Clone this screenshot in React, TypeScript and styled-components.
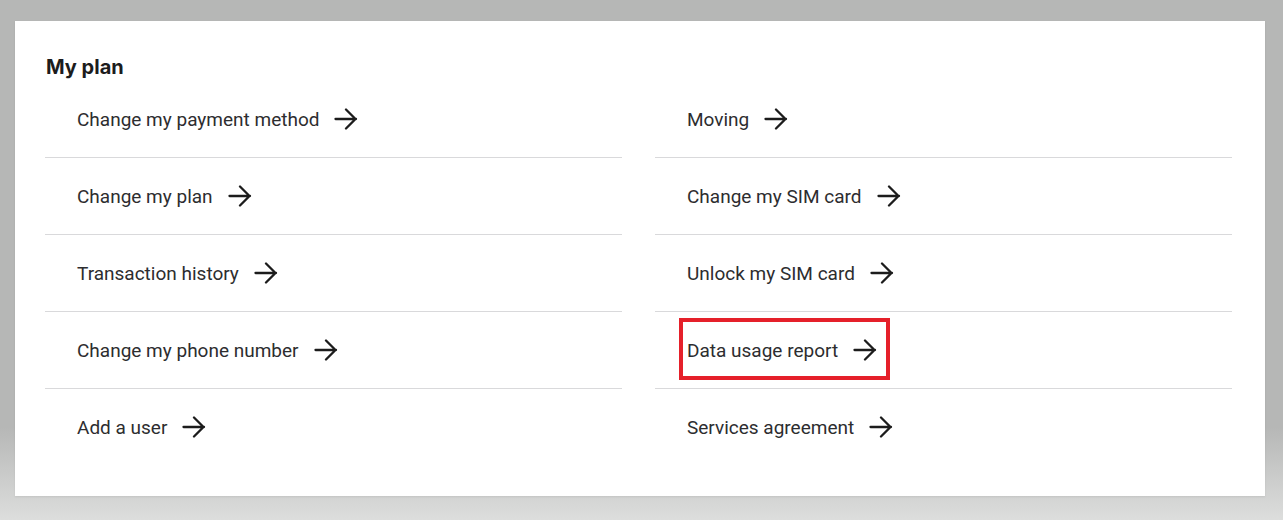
import React from 'react'
import styled, { createGlobalStyle } from 'styled-components'

const GlobalStyle = createGlobalStyle`
    html, body {
        margin: 0;
        padding: 0;
    }
    body {
        min-height: 520px;
        background: linear-gradient(#b6b7b6 0%, #b6b7b6 82%, #dddedd 100%);
        font-family: Roboto, "Liberation Sans", sans-serif;
    }
`

const Page = styled.div`
    padding: 21px 18px 25px 15px;
`

const Card = styled.section`
    background-color: #fff;
    padding: 34px 33px 30px 30px;
    box-shadow: 0 1px 2px rgba(0, 0, 0, 0.08);
`

const Title = styled.h2`
    margin: 0 0 0 1px;
    height: 26px;
    font-family: Inter, "Noto Sans", sans-serif;
    font-size: 20px;
    font-weight: 700;
    line-height: 24px;
    color: #1c1c1c;
`

const Columns = styled.div`
    display: grid;
    grid-template-columns: 1fr 1fr;
    column-gap: 33px;
`

const List = styled.ul`
    margin: 0;
    padding: 0;
    list-style: none;
`

const Row = styled.li<{ $last?: boolean }>`
    padding: 6px 0 8px 24px;
    border-bottom: 1px solid ${p => (p.$last ? 'transparent' : '#d9d9db')};
`

const Link = styled.a<{ $focused?: boolean }>`
    display: inline-flex;
    align-items: center;
    height: 52px;
    padding: 2px 9px 0 4px;
    border: 4px solid ${p => (p.$focused ? '#e5202a' : 'transparent')};
    font-size: 19px;
    color: #2d2d2f;
    text-decoration: none;
    cursor: pointer;
`

const Arrow = styled.svg`
    margin-left: 15px;
    flex-shrink: 0;
`

const ArrowIcon = () => (
    <Arrow width="24" height="22" viewBox="0 0 24 22" fill="none">
        <path
            d="M1.5 11h20.5M12 1.5l9.5 9.5-9.5 9.5"
            stroke="#1c1c1c"
            strokeWidth="2.3"
            strokeLinecap="round"
            strokeLinejoin="round"
        />
    </Arrow>
)

const left = [
    'Change my payment method',
    'Change my plan',
    'Transaction history',
    'Change my phone number',
    'Add a user',
]

const right = [
    'Moving',
    'Change my SIM card',
    'Unlock my SIM card',
    'Data usage report',
    'Services agreement',
]

const LinkList = ({ items, focused }: { items: string[]; focused?: string }) => (
    <List>
        {items.map((label, i) => (
            <Row key={label} $last={i === items.length - 1}>
                <Link $focused={label === focused}>
                    {label}
                    <ArrowIcon />
                </Link>
            </Row>
        ))}
    </List>
)

const App = () => {
    return (
        <Page>
            <GlobalStyle />
            <Card>
                <Title>My plan</Title>
                <Columns>
                    <LinkList items={left} />
                    <LinkList items={right} focused="Data usage report" />
                </Columns>
            </Card>
        </Page>
    )
}

export default App
